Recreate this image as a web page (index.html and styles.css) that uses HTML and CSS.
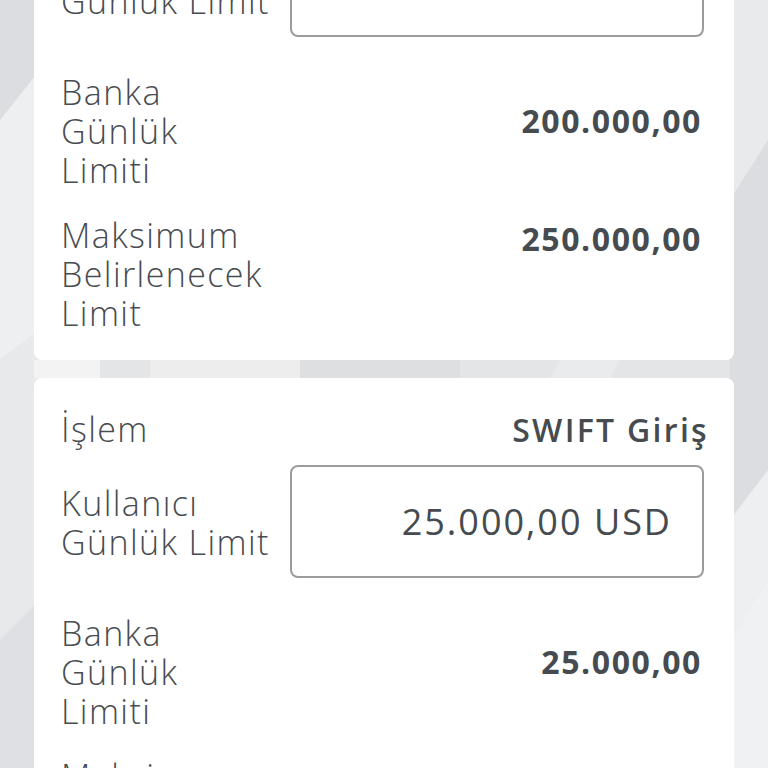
FILE: index.html
```html
<!DOCTYPE html>
<html lang="tr">
<head>
<meta charset="utf-8">
<title>Limitler</title>
<link rel="stylesheet" href="styles.css">
</head>
<body>
<svg class="bg" viewBox="0 0 768 768" preserveAspectRatio="none" aria-hidden="true">
  <rect x="0" y="0" width="768" height="768" fill="#e4e5e7"/>
  <polygon points="0,0 40,0 40,70 0,120" fill="#dcdde0"/>
  <polygon points="0,120 40,70 40,330 0,360" fill="#eeeff0"/>
  <polygon points="0,360 40,330 40,600 0,640" fill="#e8e9eb"/>
  <polygon points="0,640 40,600 40,768 0,768" fill="#dfe0e3"/>
  <polygon points="730,0 768,0 768,140 730,200" fill="#e9eaec"/>
  <polygon points="730,200 768,140 768,470 730,520" fill="#dcdde0"/>
  <polygon points="730,520 768,470 768,580 730,640" fill="#eeeff0"/>
  <polygon points="730,640 768,580 768,768 730,768" fill="#f0f1f2"/>
  <polygon points="34,360 100,360 100,378 34,378" fill="#f3f3f4"/>
  <polygon points="150,360 300,360 300,378 150,378" fill="#ededee"/>
  <polygon points="300,360 460,360 460,378 300,378" fill="#dedfe1"/>
  <polygon points="560,360 620,360 610,378 550,378" fill="#eaebec"/>
</svg>
<main class="page">
  <section class="card card-first">
    <div class="row row-text">
      <span class="label">İşlem</span>
      <span class="value value-semi">SWIFT Giriş</span>
    </div>
    <div class="row row-input">
      <span class="label label-input">Kullanıcı<br>Günlük Limit</span>
      <div class="amount-box"><span class="amount">200.000,00 TRY</span></div>
    </div>
    <div class="row row-bank">
      <span class="label">Banka<br>Günlük<br>Limiti</span>
      <span class="value value-bank">200.000,00</span>
    </div>
    <div class="row row-max">
      <span class="label">Maksimum<br>Belirlenecek<br>Limit</span>
      <span class="value value-max">250.000,00</span>
    </div>
  </section>
  <section class="card">
    <div class="row row-text">
      <span class="label">İşlem</span>
      <span class="value value-semi">SWIFT Giriş</span>
    </div>
    <div class="row row-input">
      <span class="label label-input">Kullanıcı<br>Günlük Limit</span>
      <div class="amount-box"><span class="amount">25.000,00 USD</span></div>
    </div>
    <div class="row row-bank">
      <span class="label">Banka<br>Günlük<br>Limiti</span>
      <span class="value value-bank">25.000,00</span>
    </div>
    <div class="row row-max">
      <span class="label">Maksimum<br>Belirlenecek<br>Limit</span>
      <span class="value value-max">25.000,00</span>
    </div>
  </section>
</main>
</body>
</html>
```
FILE: styles.css
```css
html, body {
  margin: 0;
  padding: 0;
  height: 100%;
  overflow: hidden;
}
body {
  background: #e4e5e7;
  font-family: "Open Sans", "Noto Sans", sans-serif;
  color: #4b5055;
  position: relative;
}
.bg {
  position: absolute;
  left: 0;
  top: 0;
  width: 768px;
  height: 768px;
  z-index: 0;
}
.page {
  position: relative;
  z-index: 1;
  display: flex;
  flex-direction: column;
  gap: 18px;
  padding: 0 34px;
}
.card {
  background: #ffffff;
  border-radius: 8px;
  padding: 32px 27px 27px 27px;
  display: flex;
  flex-direction: column;
}
.card-first {
  margin-top: -163px;
}
.row {
  display: flex;
  justify-content: space-between;
  align-items: flex-start;
}
.label {
  font-size: 34px;
  font-weight: 300;
  line-height: 39px;
  color: #474c51;
  letter-spacing: 1.4px;
}
.value {
  font-weight: 700;
  font-size: 32px;
  line-height: 39px;
  color: #464b50;
  letter-spacing: 1.6px;
  margin-right: 5px;
}
.value-semi {
  font-weight: 600;
  letter-spacing: 2.3px;
  margin-right: -2px;
}
.row-text {
  align-items: center;
}
.row-input {
  margin-top: 16px;
  align-items: center;
}
.label-input {
  padding-top: 2px;
}
.amount-box {
  box-sizing: border-box;
  width: 414px;
  height: 113px;
  border: 2px solid #9c9c9c;
  border-radius: 8px;
  display: flex;
  align-items: center;
  justify-content: flex-end;
  padding-right: 30px;
  margin-right: 3px;
}
.amount {
  font-size: 36px;
  font-weight: 500;
  color: #464b50;
  letter-spacing: 2px;
}
.row-bank {
  margin-top: 36px;
}
.value-bank {
  margin-top: 28px;
}
.row-max {
  margin-top: 26px;
}
.value-max {
  margin-top: 3px;
}
```
